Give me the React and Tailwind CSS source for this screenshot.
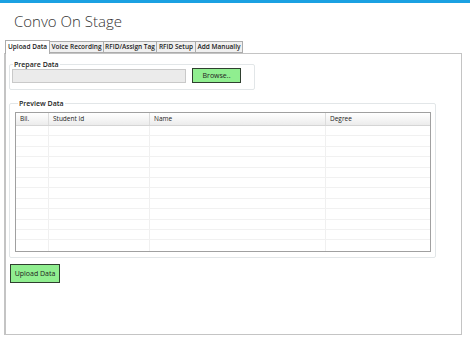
import React from 'react';

const tabs = [
  { label: 'Upload Data', w: 'w-[45px]', active: true },
  { label: 'Voice Recording', w: 'w-[54px]' },
  { label: 'RFID/Assign Tag', w: 'w-[53px]' },
  { label: 'RFID Setup', w: 'w-[39px]' },
  { label: 'Add Manually', w: 'w-[47px]' },
];

const columns = [
  { label: 'Bil.', w: 'w-[33px]' },
  { label: 'Student Id', w: 'w-[101px]' },
  { label: 'Name', w: 'w-[176px]' },
  { label: 'Degree', w: 'flex-1' },
];

const rows = Array.from({ length: 12 });

function App() {
  return (
    <div className="w-[470px] h-[341px] bg-white overflow-hidden font-['Open_Sans','Noto_Sans',sans-serif] text-[#222]">
      {/* top accent */}
      <div className="h-[3px] bg-[#1ba1e2]" />

      {/* title */}
      <h1 className="pl-[14px] pt-[9px] text-[15px] leading-[18px] font-light text-[#333]">Convo On Stage</h1>

      {/* tabs */}
      <div className="flex items-end pl-[5px] mt-[9px] h-[14px]">
        {tabs.map((t) =>
          t.active ? (
            <div
              key={t.label}
              className={`${t.w} h-[14px] -mb-px relative z-10 bg-white border border-[#acacac] border-b-0 flex items-center justify-center text-[6.5px] font-semibold leading-none`}
            >
              {t.label}
            </div>
          ) : (
            <div
              key={t.label}
              className={`${t.w} h-[12px] bg-[#f0f0f0] border border-[#acacac] border-l-0 flex items-center justify-center text-[6.5px] font-semibold leading-none`}
            >
              {t.label}
            </div>
          )
        )}
      </div>

      {/* tab panel */}
      <div className="ml-[4px] w-[458px] h-[282px] border border-[#c4c4c4] border-l-2 bg-white pl-[3px] pt-[6px]">
        {/* prepare data */}
        <fieldset className="w-[246px] h-[30px] border border-[#e2e6e8] rounded-[2px] px-[2px] pb-[5px]">
          <legend className="ml-[1px] px-[1px] text-[7px] leading-[9px] font-semibold">Prepare Data</legend>
          <div className="flex items-center gap-[6px] -mt-[1px]">
            <div className="w-[174px] h-[14px] bg-[#ebebeb] border border-[#c9c9c9]" />
            <button className="w-[49px] h-[15px] bg-[#90ee90] border border-[#2f3f2f] text-[7px] leading-none font-medium">
              Browse..
            </button>
          </div>
        </fieldset>

        {/* preview data */}
        <fieldset className="mt-[9px] w-[427px] h-[159px] border border-[#e2e6e8] rounded-[2px] pl-[5px] pt-[4px]">
          <legend className="ml-[3px] px-[1px] text-[7px] leading-[9px] font-semibold">Preview Data</legend>
          <div className="w-[416px] h-[140px] border border-[#a0a0a0] flex flex-col">
            <div className="flex h-[13px] bg-gradient-to-b from-white to-[#ececec] border-b border-[#d5d5d5]">
              {columns.map((c, i) => (
                <div
                  key={c.label}
                  className={`${c.w} h-full flex items-center pl-[4px] text-[6.5px] font-medium leading-none ${i < 3 ? 'border-r border-[#dcdcdc]' : ''}`}
                >
                  {c.label}
                </div>
              ))}
            </div>
            {rows.map((_, r) => (
              <div key={r} className="flex h-[10.4px] border-b border-[#f1f1f1] last:border-b-0">
                {columns.map((c, i) => (
                  <div key={c.label} className={`${c.w} h-full ${i < 3 ? 'border-r border-[#f0f0f0]' : ''}`} />
                ))}
              </div>
            ))}
          </div>
        </fieldset>

        {/* upload */}
        <button className="mt-[6px] ml-[1px] w-[50px] h-[19px] bg-[#90ee90] border border-[#2f3f2f] text-[7px] leading-none font-medium">
          Upload Data
        </button>
      </div>
    </div>
  );
}

export default App;
